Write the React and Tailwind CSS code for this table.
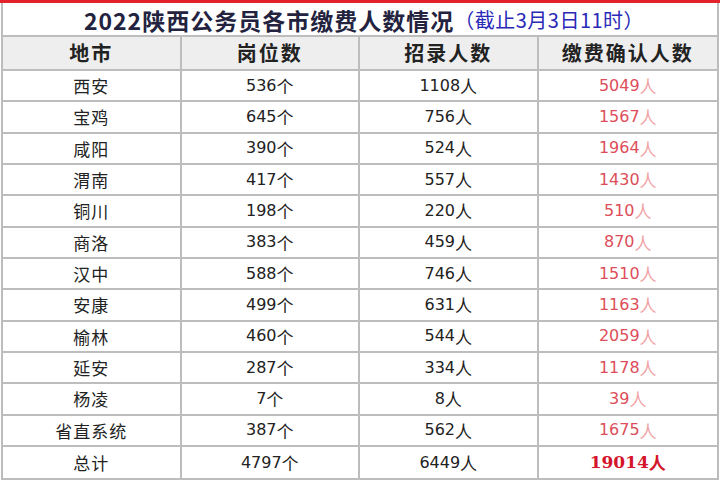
const rows = [
  ["西安", "536", "1108", "5049"],
  ["宝鸡", "645", "756", "1567"],
  ["咸阳", "390", "524", "1964"],
  ["渭南", "417", "557", "1430"],
  ["铜川", "198", "220", "510"],
  ["商洛", "383", "459", "870"],
  ["汉中", "588", "746", "1510"],
  ["安康", "499", "631", "1163"],
  ["榆林", "460", "544", "2059"],
  ["延安", "287", "334", "1178"],
  ["杨凌", "7", "8", "39"],
  ["省直系统", "387", "562", "1675"],
];

function Cell({ children }) {
  return (
    <div className="flex items-center justify-center border-r-2 border-[#bdbdbd] last:border-r-0">
      {children}
    </div>
  );
}

function Unit({ children, className = "" }) {
  return <span className={"font-['Noto_Sans_CJK_SC',sans-serif] text-[17px] " + className}>{children}</span>;
}

export default function App() {
  return (
    <div className="w-[720px] h-[481px] bg-white overflow-hidden font-['DejaVu_Sans','Noto_Sans_CJK_SC',sans-serif]">
      <div className="h-[3px] bg-[#e3212b]" />
      <div className="mx-[1px] border-x-2 border-b-2 border-[#bdbdbd]">
        <div className="h-[34px] flex items-center justify-center border-b-2 border-[#bdbdbd] bg-white pt-[2px] pl-[8px] font-['Noto_Sans_CJK_SC',sans-serif]">
          <span className="text-[23px] font-bold text-[#23233f] tracking-[1px]">
            2022陕西公务员各市缴费人数情况
          </span>
          <span className="text-[20px] text-[#2a2ab8] tracking-[0.5px]">（截止3月3日11时）</span>
        </div>
        <div className="h-[34px] grid grid-cols-4 bg-[#eeeeee] border-b-2 border-[#bdbdbd] text-[20px] font-bold text-[#222] tracking-[2px] font-['Noto_Sans_CJK_SC',sans-serif]">
          <Cell>地市</Cell>
          <Cell>岗位数</Cell>
          <Cell>招录人数</Cell>
          <Cell>缴费确认人数</Cell>
        </div>
        {rows.map((r) => (
          <div
            key={r[0]}
            className="h-[31.35px] grid grid-cols-4 border-b-2 border-[#bdbdbd] text-[16px] text-[#222]"
          >
            <Cell>
              <Unit className="tracking-[1px]">{r[0]}</Unit>
            </Cell>
            <Cell>
              {r[1]}
              <Unit>个</Unit>
            </Cell>
            <Cell>
              {r[2]}
              <Unit>人</Unit>
            </Cell>
            <Cell>
              <span className="text-[#dd4e5a]">{r[3]}</span>
              <Unit className="text-[#f1a3a6]">人</Unit>
            </Cell>
          </div>
        ))}
        <div className="h-[31.35px] grid grid-cols-4 text-[16px] text-[#222]">
          <Cell>
            <Unit className="tracking-[1px]">总计</Unit>
          </Cell>
          <Cell>
            4797
            <Unit>个</Unit>
          </Cell>
          <Cell>
            6449
            <Unit>人</Unit>
          </Cell>
          <Cell>
            <span className="font-bold text-[17px] text-[#d4152b] font-['DejaVu_Serif',serif]">19014</span>
            <Unit className="font-bold text-[#d4152b]">人</Unit>
          </Cell>
        </div>
      </div>
    </div>
  );
}
